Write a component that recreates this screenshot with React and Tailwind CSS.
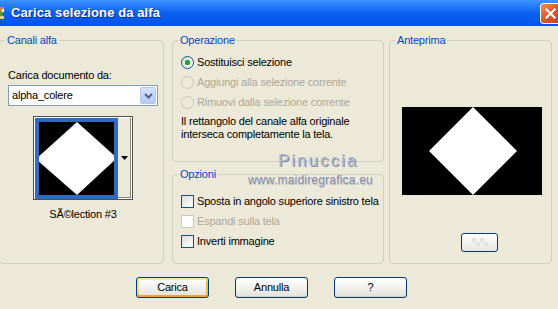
import React from 'react';

const Radio = ({ checked, disabled, label }) => (
  <div className="flex items-center h-[20px] pl-[8px]">
    <span
      className={`w-[13px] h-[13px] rounded-full border flex items-center justify-center ${
        disabled ? 'border-[#CAC8BB] bg-[#ECE9D8]' : 'border-[#1C5180] bg-linear-to-br from-[#DCDCD7] to-white'
      }`}
    >
      {checked && <span className="w-[5px] h-[5px] rounded-full bg-[#21A121] shadow-[0_0_1px_#5BC85B]" />}
    </span>
    <span className={`ml-[3px] ${disabled ? 'text-[#ACA899]' : 'text-black'}`}>{label}</span>
  </div>
);

const Check = ({ disabled, label }) => (
  <div className="flex items-center h-[20px] pl-[8px]">
    <span
      className={`w-[13px] h-[13px] border ${
        disabled ? 'border-[#CAC8BB] bg-white' : 'border-[#1C5180] bg-linear-to-br from-[#DCDCD7] to-white'
      }`}
    />
    <span className={`ml-[3px] ${disabled ? 'text-[#ACA899]' : 'text-black'}`}>{label}</span>
  </div>
);

const Group = ({ title, className, children }) => (
  <fieldset className={`border border-[#D0D0BF] rounded-[4px] ${className}`}>
    <legend className="ml-[5px] px-[2px] leading-[13px] text-[#0046D5]">{title}</legend>
    {children}
  </fieldset>
);

const XpButton = ({ label, isDefault }) => (
  <button
    type="button"
    className={`w-[73px] h-[21px] rounded-[3px] border border-[#003C74] bg-linear-to-b from-white to-[#E3E2DA] text-black leading-none ${
      isDefault
        ? 'shadow-[inset_0_2px_0_#FFE7A2,inset_0_-2px_0_#EFA23A,inset_2px_0_0_#FBD584,inset_-2px_0_0_#F4B24C]'
        : 'shadow-[inset_0_-1px_0_#D6D0C5]'
    }`}
  >
    {label}
  </button>
);

export default function App() {
  return (
    <div className="relative w-[558px] h-[309px] overflow-hidden bg-[#ECE9D8] flex flex-col font-['Liberation_Sans',Arial,sans-serif] text-[11px] tracking-[-0.2px] text-black">
      {/* Title bar */}
      <div className="h-[26px] shrink-0 flex items-center bg-linear-to-b from-[#3D93FF] via-[#0A5FF0] to-[#0055E8]">
        <svg width="8" height="16" viewBox="0 0 8 16" className="ml-[-2px]">
          <rect x="0" y="2" width="6" height="5" fill="#C98A3A" />
          <rect x="0" y="7" width="5" height="4" fill="#4C9A3A" />
          <rect x="2" y="11" width="4" height="3" fill="#E8D070" />
          <rect x="4" y="4" width="2" height="3" fill="#F2F2F2" />
        </svg>
        <span className="ml-[5px] text-white font-bold text-[13px] tracking-[0.1px] [text-shadow:1px_1px_#0A2A8C]">
          Carica selezione da alfa
        </span>
        <div className="ml-auto mr-[-3px] w-[21px] h-[21px] rounded-[3px] border border-white bg-linear-to-br from-[#F08A65] via-[#E0552A] to-[#C5431F] flex items-center justify-center">
          <svg width="11" height="11" viewBox="0 0 11 11">
            <path d="M1.5 1.5 L9.5 9.5 M9.5 1.5 L1.5 9.5" stroke="white" strokeWidth="2.2" strokeLinecap="square" />
          </svg>
        </div>
      </div>

      {/* Body */}
      <div className="flex-1 flex flex-col pt-[8px]">
        <div className="flex h-[230px]">
          {/* Canali alfa */}
          <Group title="Canali alfa" className="ml-[-1px] w-[165px] h-[230px]">
            <div className="pl-[8px] mt-[22px] leading-[13px]">Carica documento da:</div>
            <div className="ml-[8px] mt-[3px] w-[150px] h-[21px] border border-[#7F9DB9] bg-white flex items-center">
              <span className="pl-[3px] flex-1">alpha_colere</span>
              <span className="mr-[1px] w-[16px] h-[17px] rounded-[2px] bg-linear-to-b from-[#D4E0FD] to-[#B6CAF8] border border-[#B2C6F1] flex items-center justify-center">
                <svg width="9" height="6" viewBox="0 0 9 6">
                  <path d="M1 1 L4.5 4.5 L8 1" stroke="#4D6185" strokeWidth="2" fill="none" />
                </svg>
              </span>
            </div>
            <div className="ml-[33px] mt-[10px] w-[100px]">
              <div className="w-[100px] h-[84px] border border-[#505050] bg-white flex">
                <div className="mt-[1px] ml-[1px] w-[83px] h-[81px] border-[4px] border-[#316AC5] bg-black overflow-hidden">
                  <svg width="75" height="73" viewBox="0 0 75 73" className="block">
                    <polygon points="38,0 78,36 38,73 -3,37" fill="white" />
                  </svg>
                </div>
                <div className="flex-1 mt-[1px] mb-[1px] mr-[1px] bg-[#ECE9D8] border-r border-b border-[#8A8778] flex items-center justify-center">
                  <svg width="7" height="4" viewBox="0 0 7 4">
                    <polygon points="0,0 7,0 3.5,4" fill="black" />
                  </svg>
                </div>
              </div>
              <div className="mt-[8px] text-center leading-[13px]">SÃ©lection #3</div>
            </div>
          </Group>

          {/* Middle column */}
          <div className="ml-[8px] w-[212px] flex flex-col">
            <Group title="Operazione" className="h-[128px]">
              <div className="mt-[5px]">
                <Radio checked label="Sostituisci selezione" />
                <Radio disabled label="Aggiungi alla selezione corrente" />
                <Radio disabled label="Rimuovi dalla selezione corrente" />
              </div>
              <div className="pl-[8px] mt-[3px] leading-[13px]">
                Il rettangolo del canale alfa originale
                <br />
                interseca completamente la tela.
              </div>
            </Group>
            <Group title="Opzioni" className="mt-[6px] h-[96px]">
              <div className="mt-[10px]">
                <Check label="Sposta in angolo superiore sinistro tela" />
                <Check disabled label="Espandi sulla tela" />
                <Check label="Inverti immagine" />
              </div>
            </Group>
          </div>

          {/* Anteprima */}
          <Group title="Anteprima" className="ml-[5px] w-[163px] h-[230px]">
            <div className="ml-[12px] mt-[60px] w-[140px] h-[88px] bg-black">
              <svg width="140" height="88" viewBox="0 0 140 88" className="block">
                <polygon points="71,0 115,44 71,88 27,44" fill="white" />
              </svg>
            </div>
            <div className="ml-[71px] mt-[38px] w-[37px] h-[19px] rounded-[3px] border border-[#003C74] bg-linear-to-b from-white to-[#E6E5DE] flex items-center justify-center">
              <svg width="20" height="11" viewBox="0 0 20 11">
                <rect x="2" y="1" width="4" height="4" fill="#E2E2DE" />
                <rect x="10" y="1" width="4" height="4" fill="#E2E2DE" />
                <rect x="6" y="5" width="4" height="4" fill="#E2E2DE" />
                <rect x="14" y="5" width="4" height="4" fill="#E2E2DE" />
              </svg>
            </div>
          </Group>
        </div>

        {/* Bottom buttons */}
        <div className="mt-[13px] pl-[136px] flex gap-[26px]">
          <XpButton label="Carica" isDefault />
          <XpButton label="Annulla" />
          <XpButton label="?" />
        </div>
      </div>

      {/* Watermark */}
      <div className="pointer-events-none absolute left-[278px] top-[148px] text-[17px] tracking-[2px] text-[#B0B7CE] [text-shadow:1px_1px_#7F88A5]">
        Pinuccia
      </div>
      <div className="pointer-events-none absolute left-[248px] top-[171px] text-[12px] tracking-[0.2px] text-[#8A92AB] [text-shadow:0.5px_0.5px_#B8BDCC]">
        www.maidiregrafica.eu
      </div>
    </div>
  );
}
